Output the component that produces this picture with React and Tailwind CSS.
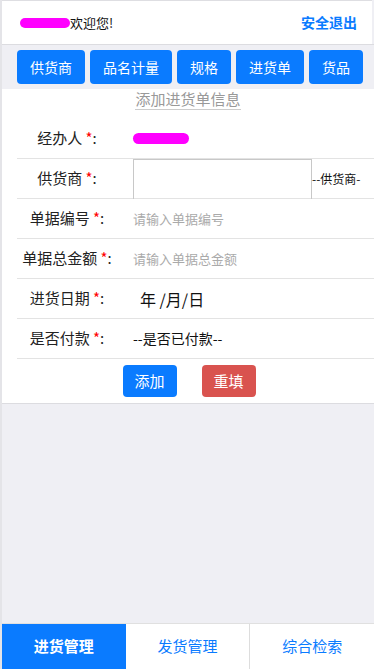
import React from 'react';

const navItems = ['供货商', '品名计量', '规格', '进货单', '货品'];

function Label({ children }) {
    return (
        <div className="w-[100px] shrink-0 text-center text-[15px] text-[#222]">
            {children} <span className="text-[#ff0000]">*</span>:
        </div>
    );
}

function Row({ label, children }) {
    return (
        <div className="flex items-center h-[40px] ml-[15px] border-b border-[#e3e3e3] gap-4">
            <Label>{label}</Label>
            {children}
        </div>
    );
}

export default function App() {
    return (
        <div
            className="flex flex-col min-h-screen h-[669px] bg-[#efeff4] border-l-2 border-[#e4e4e8]"
            style={{ fontFamily: '"Noto Sans CJK SC", "Noto Sans", sans-serif' }}
        >
            {/* header */}
            <div className="flex items-center justify-between h-[44px] bg-white border-t border-[#dedee2] mr-[2px] pl-[18px] pr-[15px]">
                <div className="flex items-center text-[13px] text-[#111]">
                    <span className="inline-block w-[50px] h-[10px] rounded-full bg-[#ff00ff]" />
                    欢迎您!
                </div>
                <a className="text-[14px] font-bold text-[#0a7bff]">安全退出</a>
            </div>

            {/* nav */}
            <div className="flex gap-[5px] pl-[15px] pt-[5px] pb-[5px] border-t border-[#dcdce0]">
                {navItems.map((n) => (
                    <button
                        key={n}
                        className="h-[34px] px-[13px] rounded-[4px] bg-[#0a7bff] text-white text-[14px]"
                    >
                        {n}
                    </button>
                ))}
            </div>

            {/* form */}
            <div className="bg-white border-b border-[#dcdce0]">
                <div className="flex justify-center h-[30px] pt-[1px]">
                    <span className="text-[15px] leading-[18px] h-[20px] text-[#999] border-b border-[#ccc]">
                        添加进货单信息
                    </span>
                </div>
                <Row label="经办人">
                    <span className="inline-block w-[56px] h-[11px] rounded-full bg-[#ff00ff]" />
                </Row>
                <div className="flex items-center h-[40px] ml-[15px] border-b border-[#e3e3e3]">
                    <Label>供货商</Label>
                    <div className="ml-4 w-[179px] h-[40px] border border-[#c8c8c8] border-b-0" />
                    <span className="text-[12px] text-[#111]">--供货商-</span>
                </div>
                <Row label="单据编号">
                    <span className="text-[13px] text-[#aaa]">请输入单据编号</span>
                </Row>
                <Row label="单据总金额">
                    <span className="text-[13px] text-[#aaa]">请输入单据总金额</span>
                </Row>
                <Row label="进货日期">
                    <span className="pl-[7px] text-[16px] text-[#111]">年 /月/日</span>
                </Row>
                <Row label="是否付款">
                    <span className="text-[14px] text-[#111]">--是否已付款--</span>
                </Row>
                <div className="flex justify-center gap-[25px] pt-[6px] pb-[6px] pl-[2px]">
                    <button className="w-[54px] h-[32px] rounded-[4px] bg-[#0a7bff] text-white text-[15px]">添加</button>
                    <button className="w-[54px] h-[32px] rounded-[4px] bg-[#d9534f] text-white text-[15px]">重填</button>
                </div>
            </div>

            {/* tabs */}
            <div className="mt-auto flex h-[46px] bg-white border-t border-[#e0e0e0]">
                <div className="flex-1 flex items-center justify-center bg-[#0a7bff] text-white text-[15px] font-bold">进货管理</div>
                <div className="flex-1 flex items-center justify-center text-[#0a7bff] text-[15px] border-r border-[#ddd]">发货管理</div>
                <div className="flex-1 flex items-center justify-center text-[#0a7bff] text-[15px]">综合检索</div>
            </div>
        </div>
    );
}
